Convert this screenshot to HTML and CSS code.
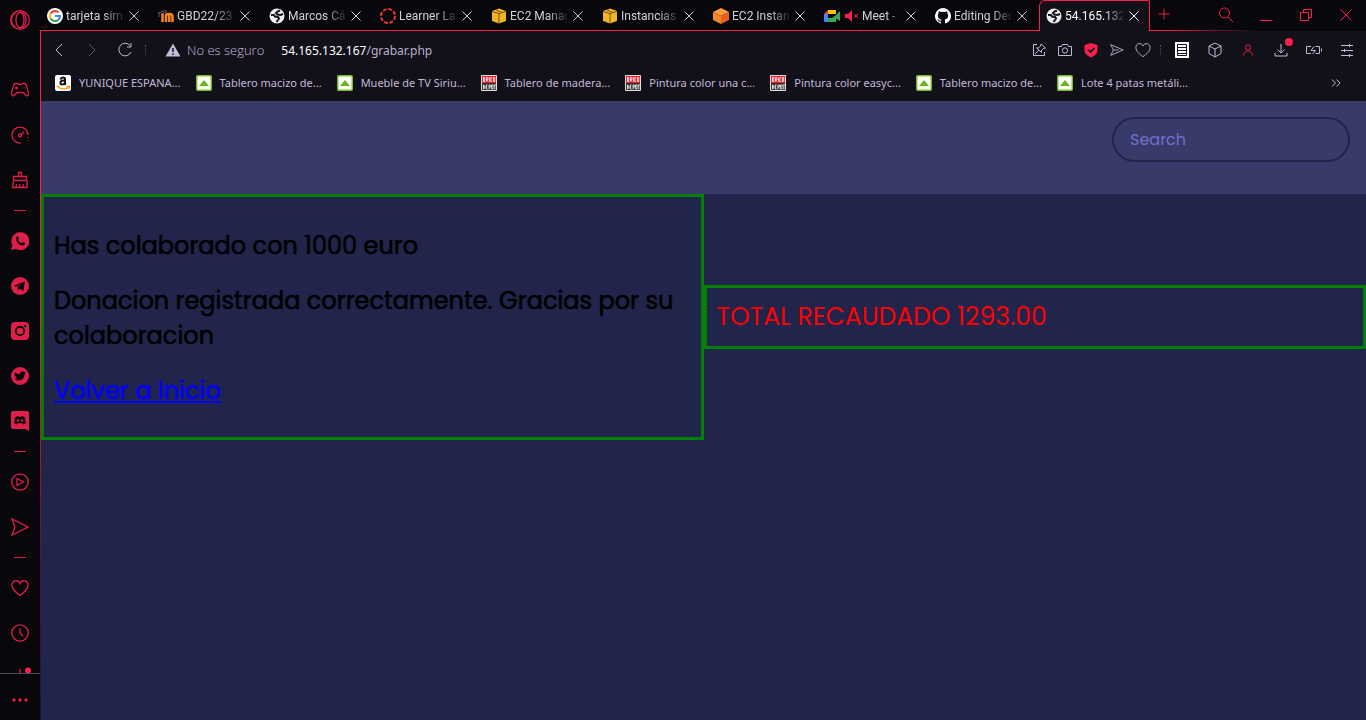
FILE: index.html
```html
<!DOCTYPE html>
<html lang="es">
<head>
<meta charset="utf-8">
<title>54.165.132.167/grabar.php</title>
<link rel="stylesheet" href="styles.css">
</head>
<body>
<svg class="defs" aria-hidden="true">
  <symbol id="x" viewBox="0 0 16 16"><path d="M3.5 3.5l9 9m0-9l-9 9"/></symbol>
  <symbol id="globe" viewBox="0 0 16 16"><circle cx="8" cy="8" r="7.500" fill="#eee" stroke="none"/><path fill="none" stroke="#15141b" stroke-width="2" d="M2 7l3 0 1 1.500 3 .5 1 1.500-1 1.500-1.500 2M11 2.500L8.500 3.500 7 5l1.500 1.500 3 .5 2.500-1"/></symbol>
  <symbol id="box" viewBox="0 0 16 16"><path fill="#f0b429" stroke="none" d="M1 3l7-2.500L15 3v10l-7 2.500L1 13z"/><path stroke="#7c5208" d="M1 3.500l7 2 7-2M8 5.500V15M5 2l6 2.500" fill="none"/></symbol>
  <symbol id="leroy" viewBox="0 0 16 16"><rect x=".75" y=".75" width="14.500" height="14.500" rx="1" fill="#fff" stroke="#78be20" stroke-width="1.500"/><path fill="#6bb51e" stroke="none" d="M8 5l5 6H3z"/></symbol>
  <symbol id="brico" viewBox="0 0 16 16"><path fill="#e21f2b" stroke="none" d="M0 0h16v8H0z"/><path fill="#333" stroke="none" d="M0 8h16v8H0z"/><path stroke="#ddd" fill="none" d="M.5.5h15v15H.5z"/><path fill="none" stroke="#fff" stroke-width=".8" d="M2.500 2.500v4h1.300v-4zM5.500 6.500v-4H7v2H5.500L7 6.500M8.500 2.500v4M11 2.500H9.800v4H11M12.300 2.500v4h1.400v-4zM2.500 10v4l1.300-1v-2zM6.500 10H5.200v4h1.300M5.200 12h1M8 14.500V10h1.400v2H8M10.500 10v4H12v-4zM12.500 10h2.500m-1.200 0v4.500"/></symbol>
  <symbol id="heart" viewBox="0 0 18 18"><path d="M9 16.500C5 13.500 1 10.500 1 6c0-4.500 6-6 8-1.500C11 0 17 1.500 17 6c0 4.500-4 7.500-8 10.500z"/></symbol>
  <symbol id="send" viewBox="0 0 18 18"><path d="M1 1l16 8-16 8 3-8z"/></symbol>
</svg>
<div class="browser">
  <nav class="sidebar" aria-label="Barra lateral">
    <button class="side-logo" aria-label="Opera"><svg viewBox="0 0 20 20"><circle cx="10" cy="10" r="9.300"/><ellipse cx="10" cy="10" rx="4" ry="8"/><path d="M10 2c8-1 8 17 0 16M6 2.500c-6 3-6 12 0 15"/></svg></button>
    <button class="side-btn" aria-label="GX Corner"><svg viewBox="0 0 18 18"><path d="M3 3.500l1-1h3l1 1h2l1-1h3l1 1 2.500 8c.5 4-2 4-3.500 2l-2-2H6l-2 2c-1.500 2-4 2-3.500-2zM4 7h3M5.500 5.500v3M11.500 7h.5M13.500 7h.5"/></svg></button>
    <button class="side-btn" aria-label="GX Control"><svg viewBox="0 0 18 18"><path d="M10 17a8 8 0 1 1 7-8M17 11v1M17 14v.5M10 9l3-3"/><circle cx="9" cy="9.500" r="1.500"/></svg></button>
    <button class="side-btn" aria-label="GX Cleaner"><svg viewBox="0 0 18 18"><path d="M7.500 5.500v-4h3v4M2.500 5.500h13v4h-13zM2.500 9.500L1.500 16.500h14.500v-7M5 16l.5-3M8.500 16l.5-3M12 16v-3"/></svg></button>
    <span class="dash"></span>
    <button class="side-btn" aria-label="WhatsApp"><svg viewBox="0 0 18 18" class="solid"><path d="M0 18l1.500-4.500A9 9 0 1 1 5 17z"/><path class="cut" d="M5.500 4.500l1.500 0 1 2.500-1 1c1 2 2 2.500 3.500 3.200l1-1.200 2.500 1-.5 2c-4 2.500-10-3.500-8-8.500z"/></svg></button>
    <button class="side-btn" aria-label="Telegram"><svg viewBox="0 0 18 18" class="solid"><circle cx="9" cy="9" r="9"/><path class="cut" d="M3 8.700L14 4.300 12.300 14l-3.500-2.500-1.800 1.800-.3-3.300 5-4-6.500 3.700z"/></svg></button>
    <button class="side-btn" aria-label="Instagram"><svg viewBox="0 0 18 18" class="solid"><rect width="18" height="18" rx="4"/><circle cx="9" cy="9" r="4.200" fill="none" stroke="#08080c" stroke-width="1.800"/><circle class="cut" cx="14" cy="4" r="1.300"/></svg></button>
    <button class="side-btn" aria-label="Twitter"><svg viewBox="0 0 18 18" class="solid"><circle cx="9" cy="9" r="9"/><path class="cut" d="M4 5c1.500 1.500 3 2.200 5 2.300C8.700 4 12 3.500 13 5l1.500-.5-.8 1.300 1.300-.2-1.300 1.500C13.500 13 8 15 3.500 12.500c1.500 0 2.300-.3 3-.9-1.200-.2-1.900-.8-2.200-1.700h1C4 9.300 3.500 8.400 3.500 7.300l1 .3C3.600 6.800 3.500 6 4 5z"/></svg></button>
    <button class="side-btn" aria-label="Discord"><svg viewBox="0 0 18 20" class="solid discord"><path d="M2 0h14q2 0 2 2v18l-4-2H2q-2 0-2-2V2q0-2 2-2z"/><path class="cut" d="M4.500 6L7 5l.5.8h3L11 5l2.500 1 1.500 6-2.500 1.500-1-1.300h-5l-1 1.300L3 12z"/><circle cx="7" cy="9.500" r="1.200"/><circle cx="11" cy="9.500" r="1.200"/></svg></button>
    <span class="dash"></span>
    <button class="side-btn" aria-label="Reproductor"><svg viewBox="0 0 18 18"><circle cx="9" cy="9" r="8.200"/><path d="M6 5.500v7L12.500 9z"/></svg></button>
    <button class="side-btn" aria-label="Mi Flow"><svg><use href="#send"/></svg></button>
    <span class="dash"></span>
    <button class="side-btn" aria-label="Marcadores"><svg><use href="#heart"/></svg></button>
    <button class="side-btn" aria-label="Historial"><svg viewBox="0 0 18 18"><circle cx="9" cy="9" r="8.200"/><path d="M9 4.500V9l3 3"/></svg></button>
    <button class="side-btn side-last" aria-label="Descargas"><svg viewBox="0 0 18 18"><path d="M9 0v12"/><circle cx="17" cy="1.500" r="3" fill="#fa1e4e" stroke="none"/></svg></button>
    <button class="side-more" aria-label="Más"><svg viewBox="0 0 18 18" class="solid"><circle cx="3" cy="9" r="1.700"/><circle cx="9" cy="9" r="1.700"/><circle cx="15" cy="9" r="1.700"/></svg></button>
  </nav>
  <div class="window">
    <div class="tabstrip">
      <div class="tabs">
        <div class="tab"><svg class="fav" viewBox="0 0 16 16"><circle cx="8" cy="8" r="8" fill="#fff" stroke="none"/><g fill="none" stroke-width="2.200"><path stroke="#ea4335" d="M3.600 5.500A5 5 0 0 1 11.500 4.500"/><path stroke="#fbbc05" d="M3.600 5.500a5 5 0 0 0 0 5"/><path stroke="#34a853" d="M3.600 10.500a5 5 0 0 0 7.800 1.200"/><path stroke="#4285f4" d="M8 8h5c0 1.500-.5 2.800-1.600 3.700"/></g></svg><a href="#">tarjeta sim</a><button class="close" aria-label="Cerrar"><svg><use href="#x"/></svg></button></div>
        <div class="tab"><svg class="fav" viewBox="0 0 16 16"><path fill="none" stroke="#f58220" stroke-width="2.600" d="M4.500 14V5M8 14V8q0-2 2-2l2 0q2.500 0 2.500 2.500V14M11.300 14V7"/><path stroke="#6a5650" fill="none" d="M0 5l7-2.500 2 1L3 6M1 5v4"/></svg><a href="#">GBD22/23:</a><button class="close" aria-label="Cerrar"><svg><use href="#x"/></svg></button></div>
        <div class="tab"><svg class="fav"><use href="#globe"/></svg><a href="#">Marcos Cá</a><button class="close" aria-label="Cerrar"><svg><use href="#x"/></svg></button></div>
        <div class="tab"><svg class="fav" viewBox="0 0 16 16"><circle cx="8" cy="8" r="7" fill="none" stroke="#e23a2e" stroke-width="2" stroke-dasharray="4 1.500"/></svg><a href="#">Learner Lab</a><button class="close" aria-label="Cerrar"><svg><use href="#x"/></svg></button></div>
        <div class="tab"><svg class="fav"><use href="#box"/></svg><a href="#">EC2 Manag</a><button class="close" aria-label="Cerrar"><svg><use href="#x"/></svg></button></div>
        <div class="tab"><svg class="fav"><use href="#box"/></svg><a href="#">Instancias |</a><button class="close" aria-label="Cerrar"><svg><use href="#x"/></svg></button></div>
        <div class="tab"><svg class="fav" viewBox="0 0 16 16"><g stroke="none"><path fill="#ff9d3c" d="M8 0l8 4-8 4-8-4z"/><path fill="#f68428" d="M0 4l8 4v8l-8-4z"/><path fill="#e8601c" d="M16 4L8 8v8l8-4z"/></g></svg><a href="#">EC2 Instan</a><button class="close" aria-label="Cerrar"><svg><use href="#x"/></svg></button></div>
        <div class="tab"><svg class="fav" viewBox="0 0 16 16"><g stroke="none"><path fill="#fbbc04" d="M4 2h8v4H4z"/><path fill="#ea4335" d="M4 2v4H0z"/><path fill="#4285f4" d="M0 6h4v8H1q-1 0-1-1z"/><path fill="#34a853" d="M4 10h4l4-3 4-4v10l-4-2.500V14H4z"/></g></svg><svg class="mute" viewBox="0 0 14 14"><path fill="#fa1e4e" stroke="none" d="M0 5h3l4-4v12L3 9H0z"/><path stroke="#fa1e4e" d="M9 5l4 4m0-4L9 9"/></svg><a href="#">Meet -</a><button class="close" aria-label="Cerrar"><svg><use href="#x"/></svg></button></div>
        <div class="tab"><svg class="fav" viewBox="0 0 16 16"><path fill="#fff" stroke="none" d="M8 0a8 8 0 0 0-2.500 15.600c.4 0 .5-.2.5-.4V13.700c-2.200.5-2.700-1-2.700-1-.4-.9-.9-1.200-.9-1.200-.7-.5.1-.5.1-.5.8.1 1.200.8 1.200.8.7 1.300 1.900.9 2.300.7.1-.5.3-.9.500-1.100-1.800-.2-3.600-.9-3.600-4 0-.9.300-1.600.8-2.100-.1-.2-.4-1 .1-2.100 0 0 .7-.2 2.200.8a7.500 7.500 0 0 1 4 0c1.500-1 2.200-.8 2.200-.8.4 1.100.2 1.900.1 2.100.5.6.8 1.300.8 2.100 0 3.100-1.900 3.700-3.600 3.900.3.300.5.800.5 1.500v2.400c0 .2.100.4.500.4A8 8 0 0 0 8 0z"/></svg><a href="#">Editing Des</a><button class="close" aria-label="Cerrar"><svg><use href="#x"/></svg></button></div>
        <div class="tab active"><svg class="fav"><use href="#globe"/></svg><a href="#">54.165.132</a><button class="close" aria-label="Cerrar"><svg><use href="#x"/></svg></button></div>
      </div>
      <button class="newtab" aria-label="Pestaña nueva"><svg viewBox="0 0 16 16"><path d="M8 2.500v11M2.500 8h11"/></svg></button>
      <div class="controls">
        <button aria-label="Buscar pestañas"><svg viewBox="0 0 16 16"><circle cx="6.500" cy="6" r="5"/><path d="M10 10l5 5"/></svg></button>
        <button aria-label="Minimizar"><svg viewBox="0 0 16 16"><path d="M2 13.500h12"/></svg></button>
        <button aria-label="Restaurar"><svg viewBox="0 0 16 16"><path d="M2.500 5.500h8v8h-8zM5.500 5V2.500h8v8H11"/></svg></button>
        <button aria-label="Cerrar ventana"><svg viewBox="0 0 16 16"><path d="M2.500 2.500l11 11m0-11l-11 11"/></svg></button>
      </div>
    </div>
    <div class="toolbar">
      <button class="nav-btn" aria-label="Atrás"><svg viewBox="0 0 16 16"><path d="M11 2L5 8l6 6"/></svg></button>
      <button class="nav-btn dim" aria-label="Adelante"><svg viewBox="0 0 16 16"><path d="M5 2l6 6-6 6"/></svg></button>
      <button class="nav-btn" aria-label="Recargar"><svg viewBox="0 0 16 16"><path d="M14 10a6.300 6.300 0 1 1-1-6.500M14 1v4h-4"/></svg></button>
      <span class="grip"></span>
      <button class="security"><svg viewBox="0 0 16 16"><path fill="#c3b9d9" stroke="none" d="M8 1.500L15.500 14.500H.5z"/><path stroke="#121019" stroke-width="1.500" d="M8 6v4M8 11.500v1.500"/></svg>No es seguro</button>
      <div class="url"><b>54.165.132.167</b>/grabar.php</div>
      <div class="actions">
        <button aria-label="Fijar"><svg viewBox="0 0 16 16"><path d="M6 2.500H2.500v11h11V10M4 12l4-4M10 2l4.500 4-2 .5-2 2v2L5.500 6h2l2-2z"/></svg></button>
        <button aria-label="Captura"><svg viewBox="0 0 16 16"><path d="M1.500 4.500h3l1-2h5l1 2h3v9h-13z"/><circle cx="8" cy="8.500" r="2.700"/></svg></button>
        <button aria-label="Bloqueador"><svg viewBox="0 0 16 16"><path fill="#fa1e4e" stroke="none" d="M8 1l6.500 2v5c0 4-3.500 6-6.500 7.500C5 14 1.500 12 1.500 8V3z"/><path stroke="#121019" stroke-width="1.700" d="M5 7.500l2.500 2.500L11.500 6"/></svg></button>
        <button aria-label="Enviar"><svg viewBox="0 0 18 18"><path d="M2 3l14 6-14 6 3-6zM5 9h6"/></svg></button>
        <button aria-label="Guardar"><svg><use href="#heart"/></svg></button>
        <span class="grip"></span>
        <button class="wide" aria-label="Lector"><svg viewBox="0 0 16 16"><path fill="#fff" stroke="none" d="M1 0h14v16H1z"/><path stroke="#121019" d="M3.500 2.500h9v11h-9zM4 5.500h8M4 8.500h8M4 11.500h8"/></svg></button>
        <button class="wide" aria-label="Extensiones"><svg viewBox="0 0 16 16"><path d="M8 1l6 3v7.500L8 15l-6-3.500V4zM2 4l6 3 6-3M8 7v8"/></svg></button>
        <button class="wide red" aria-label="Perfil"><svg viewBox="0 0 16 16"><circle cx="8" cy="5.500" r="2.700"/><path d="M3.500 13.500c0-6 9-6 9 0"/></svg></button>
        <button class="wide" aria-label="Descargas"><svg viewBox="0 0 16 16"><path d="M8 2v9M4.500 7.500L8 11l3.500-3.500M2 11v3h12v-3"/></svg><i class="dot"></i></button>
        <button class="wide" aria-label="Batería"><svg viewBox="0 0 16 16"><path d="M5 4.500H.5v7H5M9.500 4.500h4v7h-4M15.500 6.500v3M8 4.500L5 8.500h4.500L6.500 12"/></svg></button>
        <button class="wide" aria-label="Configuración fácil"><svg viewBox="0 0 16 16"><path d="M2 3.500h12M2 8.500h12M2 13.500h12M10.500 2v3M5.500 7v3M10.500 12v3"/></svg></button>
      </div>
    </div>
    <div class="bookmarks">
      <a href="#"><svg viewBox="0 0 16 16"><rect width="16" height="16" rx="2" fill="#fff" stroke="none"/><path fill="none" stroke="#111" stroke-width="2" d="M5.500 4.500C6 2 10 2 10 4v4q0 1 1 1.500M10 5.500C6 5 5 7 5.500 8.500S9 10 10 7.500"/><path stroke="#f90" stroke-width="1.300" fill="none" d="M1.500 11q6.500 5 11.500 1.500m-1.500-1h3l-.5 2.500"/></svg>YUNIQUE ESPANA...</a>
      <a href="#"><svg><use href="#leroy"/></svg>Tablero macizo de...</a>
      <a href="#"><svg><use href="#leroy"/></svg>Mueble de TV Siriu...</a>
      <a href="#"><svg><use href="#brico"/></svg>Tablero de madera...</a>
      <a href="#"><svg><use href="#brico"/></svg>Pintura color una c...</a>
      <a href="#"><svg><use href="#brico"/></svg>Pintura color easyc...</a>
      <a href="#"><svg><use href="#leroy"/></svg>Tablero macizo de...</a>
      <a href="#"><svg><use href="#leroy"/></svg>Lote 4 patas metáli...</a>
      <button aria-label="Más marcadores"><svg viewBox="0 0 16 16"><path d="M4 4.500L7.500 8 4 11.500M8.500 4.500L12 8l-3.500 3.500"/></svg></button>
    </div>
    <div class="page">
      <header class="page-header"><input class="search" type="search" placeholder="Search" aria-label="Search"></header>
      <main class="columns">
        <section class="card result">
          <p>Has colaborado con 1000 euro</p>
          <p>Donacion registrada correctamente. Gracias por su colaboracion</p>
          <p><a href="#">Volver a Inicio</a></p>
        </section>
        <section class="card total">TOTAL RECAUDADO 1293.00</section>
      </main>
    </div>
  </div>
</div>
</body>
</html>
```

FILE: styles.css
```css
* { box-sizing: border-box; }
body { margin: 0; background: #08080c; font-family: "Noto Sans", "Open Sans", sans-serif; font-size: 11px; }
button { background: none; border: 0; padding: 0; margin: 0; color: inherit; font: inherit; display: flex; align-items: center; justify-content: center; flex: none; }
a { color: inherit; text-decoration: none; }
svg { width: 16px; height: 16px; fill: none; stroke: currentColor; flex: none; }
.defs { position: absolute; width: 0; height: 0; }

.browser { display: flex; height: 100vh; }

.sidebar { width: 40px; flex: none; display: flex; flex-direction: column; color: #e01e4a; overflow: hidden; }
.sidebar svg { width: 18px; height: 18px; stroke-width: 1.3; }
.sidebar .side-logo { height: 40px; margin-bottom: 27px; }
.sidebar .side-logo svg { width: 20px; height: 20px; }
.side-btn { height: 45px; }
.sidebar .discord { height: 20px; }
.solid { fill: currentColor; stroke: none; }
.cut { fill: #08080c; }
.dash { flex: none; height: 16px; display: flex; align-items: center; justify-content: center; }
.dash::before { content: ""; width: 12px; height: 1px; background: currentColor; }
.sidebar .side-last { flex: 1 1 0; min-height: 0; align-items: flex-start; padding-top: 14px; overflow: hidden; }
.side-last svg { overflow: visible; }
.side-more { height: 47px; border-top: 1px solid #4c4b50; padding-top: 5px; }

.window { flex: 1; min-width: 0; display: flex; flex-direction: column; background: linear-gradient(#fa1e4e 40%, #5a1030 75%, #1b1226) left 30px / 1px 100% no-repeat; padding-left: 1px; }

.tabstrip { height: 31px; flex: none; display: flex; background: linear-gradient(90deg, #fa1e4e 85%, transparent 92%) bottom / 100% 1px no-repeat, #08080c; color: #d2d0d6; margin-left: -1px; padding-left: 1px; }
.tabs { display: flex; }
.tab { width: 111px; height: 30px; display: flex; align-items: center; padding: 1px 10px 0 6px; }
.tab a { flex: 1; min-width: 0; margin-left: 3px; font-size: 12px; line-height: 20px; white-space: nowrap; font-family: Roboto, sans-serif; -webkit-mask-image: linear-gradient(90deg, #000 65%, transparent 105%); mask-image: linear-gradient(90deg, #000 65%, transparent 105%); }
.close { width: 16px; height: 16px; margin-left: 3px; }
.tab .mute { width: 14px; height: 14px; margin-left: 5px; }
.active { height: 31px; margin-left: -1px; padding: 0 7px 0 6px; border: 1px solid #fa1e4e; border-bottom: 0; border-radius: 6px 2px 0 0; background: #121019; color: #fff; }
.newtab { width: 26px; height: 28px; margin-left: 1px; color: #e01e4a; }
.controls { display: flex; margin-left: auto; color: #fa1e4e; }
.controls button { width: 40px; height: 30px; }

.toolbar { height: 38px; flex: none; display: flex; align-items: center; background: #121019; color: #c3b9d9; padding: 0 3px 0 1px; }
.nav-btn { width: 33px; height: 30px; }
.dim { opacity: .4; }
.grip { width: 9px; height: 10px; display: flex; justify-content: center; }
.grip::before { content: ""; width: 0; border-left: 1px dotted #55505f; }
.security { font-family: "Open Sans", sans-serif; font-size: 13px; font-weight: 300; gap: 6px; margin-left: 15px; }
.url { margin-left: 17px; font-size: 12px; color: #b9b1cc; }
.url b { color: #fff; font-weight: 400; }
.actions { margin-left: auto; display: flex; align-items: center; }
.actions button { width: 26px; height: 30px; position: relative; }
.actions .wide { width: 33px; }
.actions .red { color: #e01e4a; }
.dot { position: absolute; top: 3px; right: 4px; width: 8px; height: 8px; border-radius: 50%; background: #fa1e4e; }

.bookmarks { height: 32px; flex: none; display: flex; align-items: center; gap: 15px; background: #121019; color: #c3b9d9; padding: 0 22px 5px 14px; }
.bookmarks a { display: flex; align-items: center; gap: 8px; white-space: nowrap; }
.bookmarks button { margin-left: auto; }

.page { flex: 1; min-height: 0; background: #21244b; color: #000; font-family: Poppins, Inter, sans-serif; }
.page-header { background: #383b69; display: flex; justify-content: flex-end; padding: 16px 16px 32px; }
.search { width: 238px; height: 45px; border: 2px solid #21244b; border-radius: 23px; background: none; padding: 0 16px; font: inherit; font-size: 16px; color: #7070d0; outline: 0; -webkit-appearance: none; appearance: none; }
.search::placeholder { color: #7070d0; opacity: 1; }
.columns { display: grid; grid-template-columns: 1fr 1fr; align-items: center; }
.card { border: 3px solid #008000; padding: 11px 10px 9px; font-size: 25px; line-height: 35px; }
.card p { margin: 20px 0; }
.result { font-size: 24px; text-shadow: 0 0 1px currentColor; }
.result a { color: #00f; text-decoration: underline; text-shadow: 0 0 1px #00f; }
.total { color: #f00; padding-bottom: 12px; }
```
